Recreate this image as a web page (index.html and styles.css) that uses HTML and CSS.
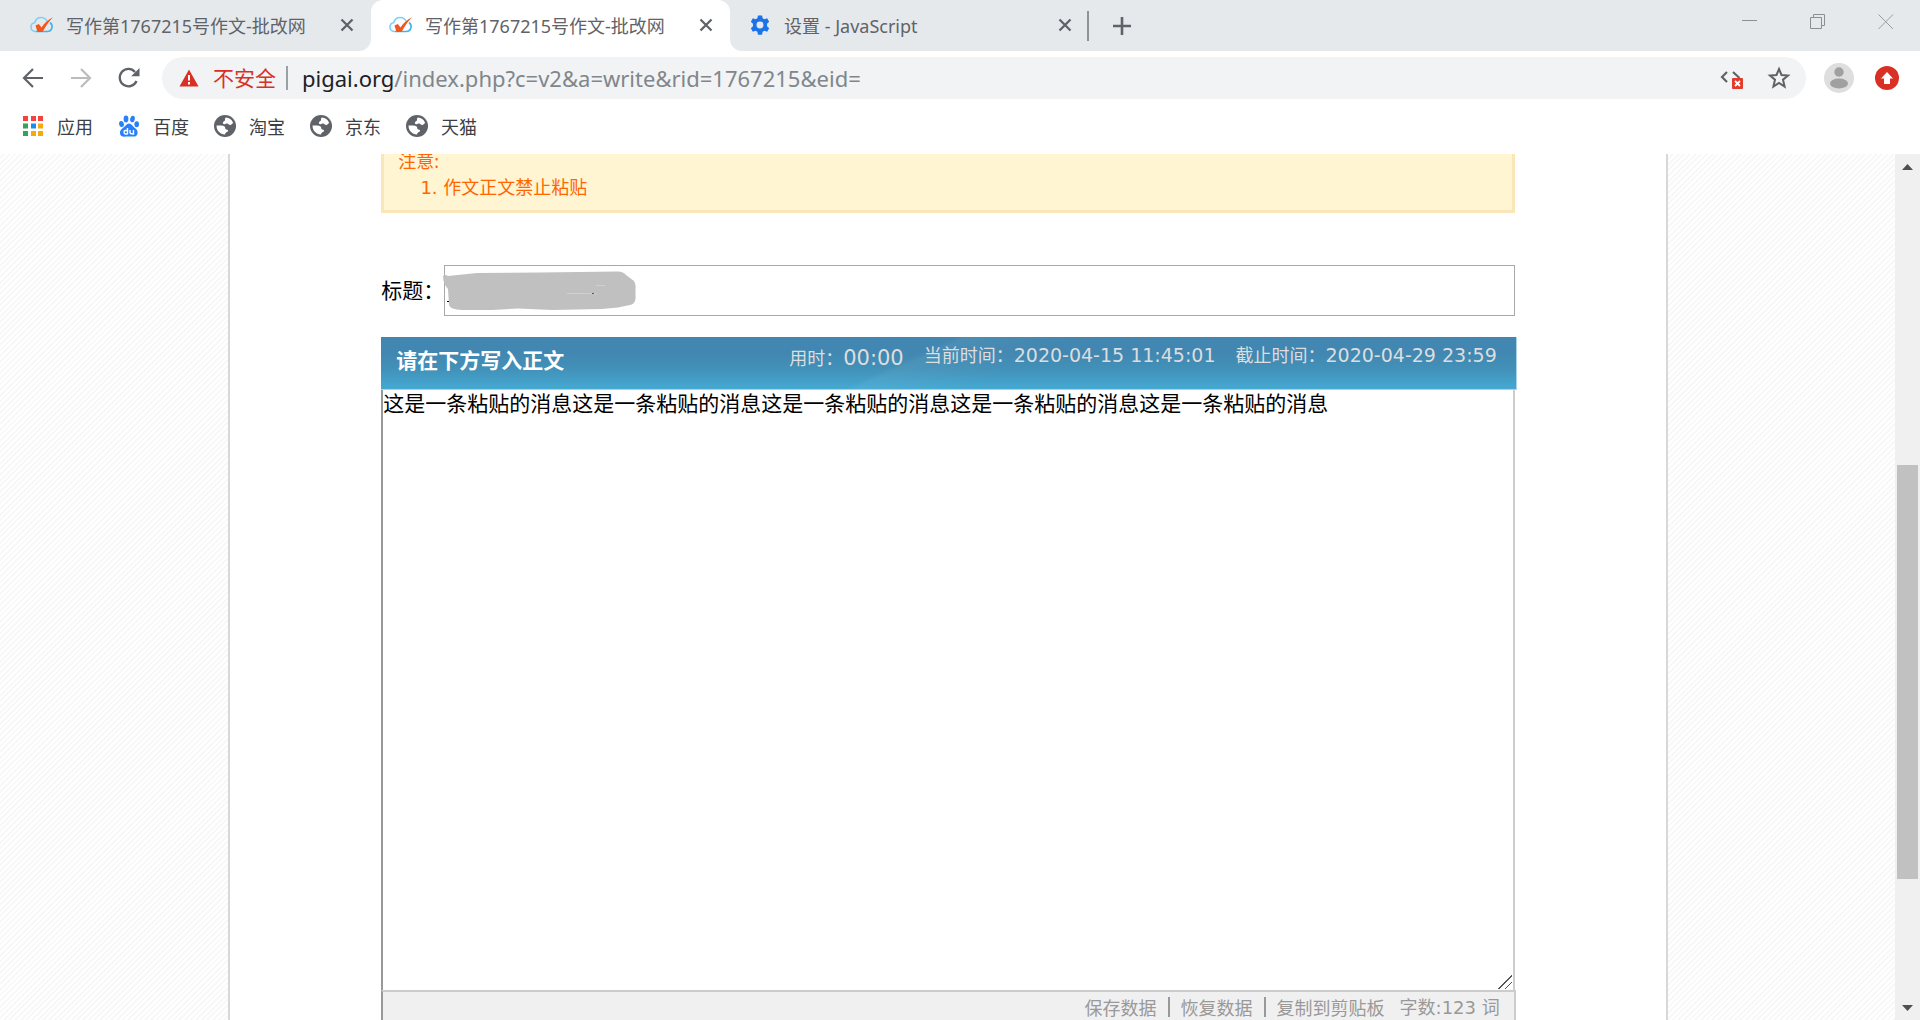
FILE: index.html
```html
<!DOCTYPE html>
<html lang="zh-CN">
<head>
<meta charset="utf-8">
<title>写作第1767215号作文-批改网</title>
<link rel="stylesheet" href="styles.css">
</head>
<body>
<svg class="defs" aria-hidden="true">
  <symbol id="cloud" viewBox="0 0 24 18">
    <path d="M6 15.500C2.500 15.500 1 13.500 1 11.200C1 8.700 2.700 7 4.700 6.800C5.500 3.500 8 1.500 11 1.500C14 1.500 16 3 17 5" fill="none" stroke="#7fd0f7" stroke-width="1.600"/>
    <path d="M20 6.500C22 8 22.500 9.500 22 11.500C21.500 14 19.500 15.500 17 15.500H6" fill="none" stroke="#3fb4ee" stroke-width="1.600"/>
    <path d="M5.500 9.500L8.800 8L11.500 11.500C14.500 7 18 3.500 23 1.200C19 5 15.500 10.500 12.500 16H7.500Z" fill="#f2571e"/>
  </symbol>
  <symbol id="close" viewBox="0 0 20 20"><path d="M4.500 4.500L15.500 15.500M15.500 4.500L4.500 15.500" stroke="#5f6368" stroke-width="2.300"/></symbol>
  <symbol id="globe" viewBox="0 0 24 24">
    <circle cx="12" cy="12" r="12" fill="#5f6368"/>
    <path d="M13 2.800C16.500 3 19.500 5 20.800 8.500C20 9.500 19 10.800 17.500 10.800C15.500 10.800 16 9.300 14.500 9.300C13 9.300 12.500 10.300 11 10C9.300 9.600 9.300 7.700 10.500 7C11.500 6.500 12.300 6.300 12 5.300C11.800 4.400 12.200 3.500 13 2.800Z" fill="#fff"/>
    <path d="M2.800 11.500H8C11 11.500 12.300 12.800 12.300 14.500C12.300 15.700 13 15.800 14.500 16C16 16.300 15.500 18 14 18.500C12.500 19 12.500 20 12 21.200C6.500 21 2.600 17 2.800 11.500Z" fill="#fff"/>
  </symbol>
</svg>

<header class="browser">
  <div class="tabstrip">
    <div class="tab">
      <svg class="favicon"><use href="#cloud"/></svg>
      <span class="tab-title">写作第1767215号作文-批改网</span>
      <button class="icon-btn" aria-label="关闭"><svg class="i20"><use href="#close"/></svg></button>
    </div>
    <div class="tab active">
      <svg class="favicon"><use href="#cloud"/></svg>
      <span class="tab-title">写作第1767215号作文-批改网</span>
      <button class="icon-btn" aria-label="关闭"><svg class="i20"><use href="#close"/></svg></button>
    </div>
    <div class="tab last">
      <svg class="favicon" viewBox="0 0 24 24"><path fill="#1a73e8" fill-rule="evenodd" d="M9.800 1.500h4.400l.7 3.100 1.900 1.100 3-1 2.200 3.800-2.300 2.100v2.800l2.300 2.100-2.200 3.800-3-1-1.900 1.100-.7 3.100H9.800l-.7-3.100-1.900-1.100-3 1L2 15.500l2.300-2.100v-2.800L2 8.500l2.200-3.800 3 1 1.900-1.100zM12 8.200a3.800 3.800 0 1 0 0 7.600a3.800 3.800 0 1 0 0-7.600z"/></svg>
      <span class="tab-title">设置 - JavaScript</span>
      <button class="icon-btn" aria-label="关闭"><svg class="i20"><use href="#close"/></svg></button>
    </div>
    <button class="icon-btn new-tab" aria-label="新标签页"><svg class="i20" viewBox="0 0 20 20"><path d="M10 1V19M1 10H19" stroke="#5f6368" stroke-width="2.600"/></svg></button>
    <div class="window-buttons">
      <button class="icon-btn" aria-label="最小化"><svg class="i16" viewBox="0 0 16 16"><path d="M0 6.500H15" stroke="#8c8f92"/></svg></button>
      <button class="icon-btn" aria-label="还原"><svg class="i16" viewBox="0 0 16 16"><path d="M.5 3.500H11.500V14.500H.5ZM3.500 3.500V.5H14.500V11.500H11.500" fill="none" stroke="#8c8f92"/></svg></button>
      <button class="icon-btn" aria-label="关闭窗口"><svg class="i16" viewBox="0 0 16 16"><path d="M.5.5L15 15M15 .5L.5 15" stroke="#9a9da0"/></svg></button>
    </div>
  </div>

  <div class="toolbar">
    <button class="icon-btn" aria-label="后退"><svg class="i22" viewBox="0 0 22 22"><path d="M21 11H2.500M11 2L2 11L11 20" fill="none" stroke="#5f6368" stroke-width="2.200"/></svg></button>
    <button class="icon-btn" aria-label="前进"><svg class="i22" viewBox="0 0 22 22"><path d="M1 11H19.500M11 2L20 11L11 20" fill="none" stroke="#babcbe" stroke-width="2.200"/></svg></button>
    <button class="icon-btn" aria-label="重新加载"><svg class="i22" viewBox="0 0 22 22"><path d="M18.500 14A8.700 8.700 0 1 1 17 4.900" fill="none" stroke="#5f6368" stroke-width="2.300"/><path d="M21.500 1V9.300H13.200Z" fill="#5f6368"/></svg></button>
    <div class="omnibox">
      <svg class="i20" viewBox="0 0 20 20"><path d="M10 1.500L19.500 18.500H.5Z" fill="#d93025"/><path d="M10 7V12.500M10 14V16.500" stroke="#fff" stroke-width="2"/></svg>
      <span class="insecure">不安全</span>
      <span class="url"><b>pigai.org</b>/index.php?c=v2&amp;a=write&amp;rid=1767215&amp;eid=</span>
      <button class="icon-btn" aria-label="已屏蔽脚本"><svg class="i24" viewBox="0 0 24 24"><path d="M8 6L3 11L8 16M14 6L20.500 12" fill="none" stroke="#5f6368" stroke-width="2.200"/><rect x="13" y="12" width="11" height="11" rx="1" fill="#e23b2e"/><path d="M16 15L21 20M21 15L16 20" stroke="#fff" stroke-width="1.800"/></svg></button>
      <button class="icon-btn" aria-label="为此网页添加书签"><svg class="i24" viewBox="0 0 24 24"><path d="M12 3L14.500 9L21 9.500L16 13.700L17.600 20.500L12 16.900L6.400 20.500L8 13.700L3 9.500L9.500 9Z" fill="none" stroke="#5f6368" stroke-width="2"/></svg></button>
    </div>
    <div class="toolbar-end">
      <button class="icon-btn" aria-label="用户"><svg class="i30" viewBox="0 0 30 30"><circle cx="15" cy="15" r="15" fill="#dedede"/><circle cx="15" cy="9" r="4.700" fill="#a0a0a0"/><ellipse cx="15" cy="20.500" rx="9" ry="5" fill="#a0a0a0"/></svg></button>
      <button class="icon-btn" aria-label="更新"><svg class="i24" viewBox="0 0 24 24"><circle cx="12" cy="12" r="12" fill="#d93025"/><path d="M12 6L18 12.500H15V18H9V12.500H6Z" fill="#fff"/></svg></button>
    </div>
  </div>

  <nav class="bookmarks">
    <a href="#"><svg class="i22" viewBox="0 0 22 22"><path d="M1 1h5v5H1zM9 1h5v5H9zM16 1h5v5H16z" fill="#f4433c"/><path d="M1 8.500h5v5H1zM1 16h5v5H1z" fill="#34a457"/><path d="M9 8.500h5v5H9z" fill="#1a8cf0"/><path d="M16 8.500h5v5H16zM9 16h5v5H9zM16 16h5v5H16z" fill="#f6a90f"/></svg>应用</a>
    <a href="#"><svg class="i22" viewBox="0 0 22 22"><g fill="#2a80fb"><ellipse cx="8" cy="4" rx="2.400" ry="3.400"/><ellipse cx="14.500" cy="4" rx="2.300" ry="3.300" transform="rotate(12 14.500 4)"/><ellipse cx="3.500" cy="9" rx="2.400" ry="3.100" transform="rotate(-12 3.500 9)"/><ellipse cx="18.700" cy="9.300" rx="2.300" ry="3"/><path d="M11 8.500C13.500 8.500 14.500 11 16.500 12.700C18.500 14.200 20 15.500 19.500 18.500C19 21.500 16.500 21.800 14.500 21.500H8C5 22 2.500 21.500 2 18.500C1.600 15.500 3.500 14 5.500 12.500C7.500 11 8.500 8.500 11 8.500Z"/></g><path d="M9.500 13V19.200M9.500 15.500H7.500C5.500 15.500 5.500 19 7.500 19H9.500M12 15V17.500C12 19 13 19 15.500 19V15" fill="none" stroke="#fff" stroke-width="1.400"/></svg>百度</a>
    <a href="#"><svg class="i22"><use href="#globe"/></svg>淘宝</a>
    <a href="#"><svg class="i22"><use href="#globe"/></svg>京东</a>
    <a href="#"><svg class="i22"><use href="#globe"/></svg>天猫</a>
  </nav>
</header>

<div class="viewport">
  <main class="page">
    <div class="paper">
      <section class="notice">
        <div>注意:</div>
        <ol><li>作文正文禁止粘贴</li></ol>
      </section>

      <div class="title-row">
        <label for="title">标题：</label>
        <div class="title-field">
          <input id="title" type="text">
          <svg class="redaction" viewBox="0 0 194 40" aria-hidden="true"><path d="M1 5Q3 3 6 5L35 2L98 1.500L175 .5Q181 0 184 4L192 10Q194 13 193.500 18V28Q193 33 188 34L176 36.500L160 38L110 39L76 37.500L50 39H20Q8 38.500 7 34L6 18Q1 13 1 5Z" fill="#c0c0c0"/><path d="M154 14.500H163M125 22.500L146 22.500L155 23" stroke="#d0d0d0" fill="none"/><path d="M150 22.500H152" stroke="#555"/><path d="M5 30.500H7" stroke="#000"/></svg>
        </div>
      </div>

      <section class="editor">
        <div class="editor-head">
          <h2>请在下方写入正文</h2>
          <div class="elapsed">用时：<span>00:00</span></div>
          <div class="clock">当前时间：<span>2020-04-15 11:45:01</span></div>
          <div class="clock">截止时间：<span>2020-04-29 23:59</span></div>
        </div>
        <textarea aria-label="正文">这是一条粘贴的消息这是一条粘贴的消息这是一条粘贴的消息这是一条粘贴的消息这是一条粘贴的消息</textarea>
        <div class="editor-foot">
          <a href="#">保存数据</a><i></i><a href="#">恢复数据</a><i></i><a href="#">复制到剪贴板</a>
          <span class="count">字数:123 词</span>
        </div>
      </section>
    </div>
  </main>
  <div class="scrollbar" aria-hidden="true">
    <svg class="arrow" viewBox="0 0 25 26"><path d="M7 16L12.500 10L18 16Z" fill="#505050"/></svg>
    <div class="track"><div class="thumb"></div></div>
    <svg class="arrow" viewBox="0 0 25 26"><path d="M7 11L12.500 17L18 11Z" fill="#505050"/></svg>
  </div>
</div>
</body>
</html>
```

FILE: styles.css
```css
* { box-sizing: border-box; }

body {
  margin: 0;
  height: 100vh;
  display: flex;
  flex-direction: column;
  overflow: hidden;
  background: #fff;
  font-family: "Noto Sans", "Noto Sans CJK SC", sans-serif;
  font-size: 18px;
}

a { color: inherit; text-decoration: none; }
svg { display: block; flex: none; }
.defs { position: absolute; width: 0; height: 0; }

.i16 { width: 16px; height: 16px; }
.i20 { width: 20px; height: 20px; }
.i22 { width: 22px; height: 22px; }
.i24 { width: 24px; height: 24px; }
.i30 { width: 30px; height: 30px; }

.icon-btn {
  flex: none;
  padding: 0;
  border: 0;
  background: none;
}

/* Browser frame */
.browser { flex: none; }

.tabstrip {
  height: 51px;
  display: flex;
  align-items: stretch;
  padding-left: 12px;
  background: #fff;
}

.tab {
  flex: 0 1 359px;
  display: flex;
  align-items: center;
  gap: 12px;
  padding: 0 14px 1px 18px;
  background: #e6e9ec;
  color: #5f6368;
}

.tab:first-child {
  border-radius: 0 0 12px 0;
  box-shadow: -12px 0 #e6e9ec;
}

.tab.active {
  background: linear-gradient(#e6e9ec, #e6e9ec) top / 100% 12px no-repeat, #fff;
  position: relative;
  z-index: 0;
}

.tab.active::before {
  content: "";
  position: absolute;
  inset: 0;
  z-index: -1;
  border-radius: 12px 12px 0 0;
  background: #fff;
}

.tab.last {
  border-radius: 0 0 0 12px;
  background: linear-gradient(#8f9296, #8f9296) right center / 2px 30px no-repeat, #e6e9ec;
}

.favicon { width: 24px; height: 22px; }

.tab-title {
  flex: 1;
  white-space: nowrap;
  overflow: hidden;
}

.new-tab {
  padding: 0 23px;
  background: #e6e9ec;
}

.window-buttons {
  flex: 1;
  display: flex;
  justify-content: flex-end;
  gap: 52px;
  padding: 14px 26px 0 0;
  background: #e6e9ec;
}

.window-buttons .icon-btn { align-self: flex-start; }

.toolbar {
  height: 54px;
  display: flex;
  align-items: center;
  gap: 26px;
  padding: 0 21px 0 22px;
}

.omnibox {
  flex: 1;
  height: 42px;
  display: flex;
  align-items: center;
  margin: 0 -8px 0 -4px;
  padding: 0 15px 0 17px;
  gap: 14px;
  border-radius: 21px;
  background: #f1f3f4;
  font-size: 21px;
  line-height: 30px;
}

.insecure {
  height: 24px;
  line-height: 24px;
  padding-right: 10px;
  border-right: 2px solid #9aa0a6;
  color: #d93025;
}

.url {
  flex: 1;
  font-size: 22px;
  color: #80868b;
}

.url b { font-weight: 400; color: #202124; }

.omnibox .icon-btn + .icon-btn { margin-left: 10px; }

.toolbar-end {
  display: flex;
  align-items: center;
  gap: 21px;
}

.bookmarks {
  height: 49px;
  display: flex;
  gap: 25px;
  padding: 8px 22px 0;
  color: #3c4043;
}

.bookmarks a {
  height: 26px;
  display: flex;
  align-items: center;
  gap: 13px;
}

/* Web page */
.viewport {
  flex: 1;
  min-height: 0;
  display: flex;
}

.page {
  flex: 1;
  overflow: hidden;
  display: flex;
  justify-content: center;
  padding-left: 1px;
  background: repeating-linear-gradient(135deg, #fff 0 2px, #f8f8f8 2px 4px);
}

.paper {
  width: 76%;
  display: flex;
  flex-direction: column;
  padding: 0 151px;
  border: solid #d8d8d8;
  border-width: 0 2px;
  background: #fff;
}

.notice {
  flex: none;
  margin-top: -14px;
  padding: 5px 14px 10px;
  border: 3px solid #fbe6b8;
  background: #fff5d3;
  color: #f60;
  line-height: 26px;
}

.notice ol { margin: 0; padding-left: 45px; }
.notice li::marker { font-family: "DejaVu Sans", sans-serif; }

.title-row {
  flex: none;
  display: flex;
  align-items: center;
  margin: 52px 0 21px;
  font-size: 21px;
}

.title-row label {
  width: 63px;
  padding-bottom: 3px;
  white-space: nowrap;
}

.title-field { flex: 1; position: relative; }

.title-field input {
  display: block;
  width: 100%;
  height: 51px;
  padding: 0 8px;
  border: 1px solid #a9a9a9;
  font: inherit;
}

.redaction {
  position: absolute;
  left: -2px;
  top: 6px;
  width: 194px;
  height: 40px;
}

.editor {
  flex: 1;
  display: flex;
  flex-direction: column;
}

.editor-head {
  flex: none;
  height: 53px;
  display: flex;
  align-items: flex-start;
  gap: 20px;
  margin-right: -2px;
  padding: 4px 19px 0 15px;
  border: solid #a9d3e8;
  border-width: 0 1px 1px 0;
  background:
    linear-gradient(155deg, transparent 46%, #ffffff0d 47%, transparent 56%),
    linear-gradient(#4187b1 0 30%, #4290b8 60%, #45a9d2);
  color: #ddd;
  line-height: 28px;
  white-space: nowrap;
}

.editor-head h2 {
  flex: 1;
  margin: 0;
  padding-top: 5px;
  color: #fff;
  font-size: 21px;
  font-weight: 700;
  line-height: 28px;
}

.elapsed { display: flex; padding-top: 3px; }
.clock { display: flex; }

.editor-head span { font-family: "DejaVu Sans", sans-serif; }
.elapsed span { font-size: 21px; }
.clock span { font-size: 19px; }

.editor textarea {
  flex: none;
  width: 100%;
  height: 600px;
  margin: 0;
  padding: 0;
  border: solid #ccc;
  border-width: 0 2px;
  border-left-color: #999;
  background: #fff;
  color: #000;
  font: inherit;
  font-size: 21px;
  line-height: 26px;
  resize: vertical;
}

.editor textarea::-webkit-resizer {
  background:
    linear-gradient(135deg, transparent 49%, #555 49% 54%, transparent 54%) 0 0 / 14px 14px no-repeat,
    linear-gradient(135deg, transparent 46%, #555 46% 56%, transparent 56%) 7px 7px / 7px 7px no-repeat;
}

.editor-foot {
  flex: 1 0 34px;
  display: flex;
  justify-content: flex-end;
  gap: 11px;
  margin-right: -1px;
  padding: 2px 14px 0;
  border: solid #ccc;
  border-width: 2px 2px 0;
  border-left-color: #999;
  background: #f0f0f0;
  color: #999;
  line-height: 28px;
}

.editor-foot i {
  width: 2px;
  height: 20px;
  margin-top: 3px;
  background: #999;
}

.count {
  margin-left: 4px;
  font-family: "DejaVu Sans", "Noto Sans CJK SC", sans-serif;
}

.scrollbar {
  flex: none;
  width: 25px;
  display: flex;
  flex-direction: column;
  background: #f0f0f0;
}

.arrow { width: 25px; height: 26px; }

.track {
  flex: 1;
  display: grid;
  grid-template-rows: 285fr 414fr 115fr;
  padding: 0 2px;
}

.thumb { grid-row: 2; background: #c1c1c1; }
```
